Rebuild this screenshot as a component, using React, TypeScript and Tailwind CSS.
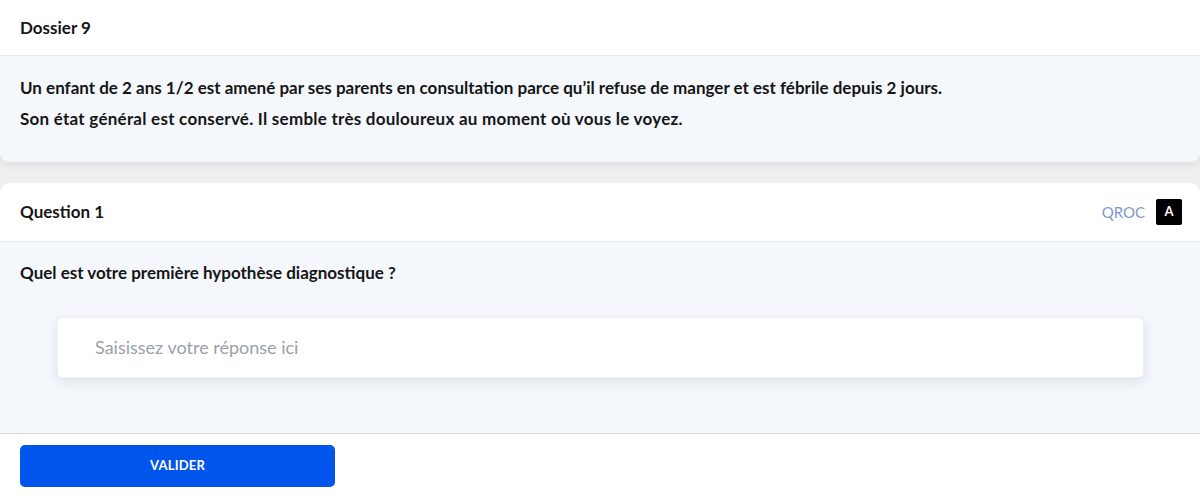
import React from "react";

export default function App() {
  return (
    <div
      className="h-[496px] w-[1200px] overflow-hidden bg-[#efefef] flex flex-col text-[#161616]"
      style={{ fontFamily: "Lato, 'Open Sans', sans-serif" }}
    >
      {/* Dossier card */}
      <div className="bg-white rounded-b-[10px] shadow-[0_4px_10px_rgba(0,0,0,0.06)] overflow-hidden">
        <div className="h-[56px] px-5 flex items-center border-b border-[#e4e8f1]">
          <h2 className="text-[17px] font-bold">Dossier 9</h2>
        </div>
        <div className="bg-[#f4f7fc] px-5 pt-[16px] pb-[28px] text-[17px] font-bold leading-[31px]">
          <p>
            Un enfant de 2 ans 1/2 est amené par ses parents en consultation parce qu’il refuse de manger et est fébrile depuis 2 jours.
          </p>
          <p className="tracking-[0.25px]">Son état général est conservé. Il semble très douloureux au moment où vous le voyez.</p>
        </div>
      </div>

      {/* Question card */}
      <div className="mt-[21px] bg-white rounded-t-[10px] flex-1 flex flex-col overflow-hidden">
        <div className="h-[59px] pl-5 pr-[18px] flex items-center justify-between border-b border-[#e4e8f1]">
          <h3 className="text-[17px] font-bold">Question 1</h3>
          <div className="flex items-center gap-[11px]">
            <span className="text-[15px] text-[#7f98cc]">QROC</span>
            <span className="w-[26px] h-[26px] bg-black rounded-[2px] text-white text-[13px] font-bold flex items-center justify-center">
              A
            </span>
          </div>
        </div>
        <div className="bg-[#f4f7fc] pl-5 pt-[19px] pb-[55px] border-b border-[#d6d9df]">
          <p className="text-[17px] font-bold leading-[24px]">Quel est votre première hypothèse diagnostique ?</p>
          <div className="mt-[32px] ml-[37px] mr-[56px] h-[61px] bg-white rounded-[5px] border border-[#eceff4] shadow-[0_4px_12px_rgba(30,40,70,0.10)] flex items-center pl-[37px]">
            <input
              className="w-full outline-none bg-transparent text-[18px] placeholder:text-[#9ba0ab]"
              placeholder="Saisissez votre réponse ici"
            />
          </div>
        </div>
        <div className="flex-1 bg-white px-5 pt-[11px]">
          <button className="w-[315px] h-[42px] bg-[#0055ec] rounded-[5px] text-white text-[13px] font-bold tracking-[0.2px]">
            VALIDER
          </button>
        </div>
      </div>
    </div>
  );
}
